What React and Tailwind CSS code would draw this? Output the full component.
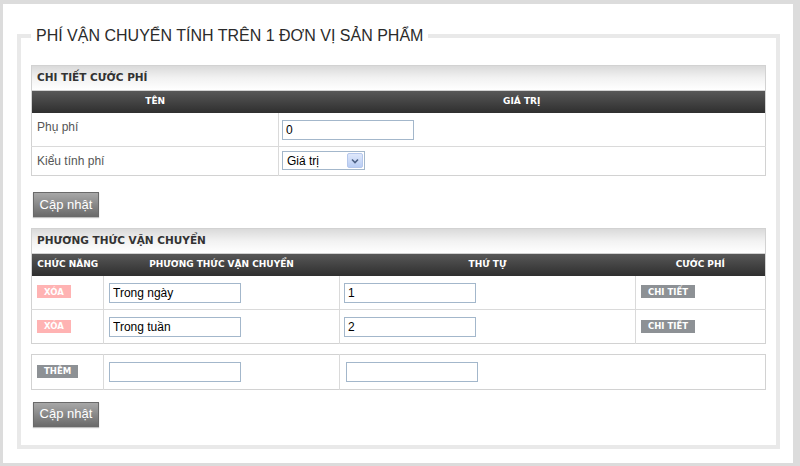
import React from "react";

const head = { fontFamily: '"DejaVu Sans", Tahoma, sans-serif' };

function SectionTitle({ children }) {
  return (
    <div
      style={head}
      className="h-[26px] flex items-center pl-[5px] text-[10.5px] font-bold text-[#333] border border-[#d2d2d2] bg-gradient-to-b from-[#dadada] via-[#f2f2f2] to-white"
    >
      {children}
    </div>
  );
}

function Th({ children, className = "" }) {
  return (
    <th
      style={head}
      className={`h-[22px] p-0 text-[9px] font-bold text-white text-center ${className}`}
    >
      {children}
    </th>
  );
}

function TextBox({ value, w = "w-[132px]", h = "h-[20px]" }) {
  return (
    <input
      readOnly
      defaultValue={value}
      className={`${w} ${h} border border-[#a3b7cb] px-[3px] text-[12px] text-black bg-white outline-none`}
    />
  );
}

function Badge({ children, tone }) {
  return (
    <span
      style={head}
      className={`inline-flex items-center justify-center h-[13px] px-[7px] text-[8.5px] font-bold text-white ${
        tone === "pink" ? "bg-[#ffb3b3]" : "bg-[#8d9195]"
      }`}
    >
      {children}
    </span>
  );
}

function UpdateButton() {
  return (
    <button className="w-[66px] h-[25px] border border-[#6a6a6a] bg-gradient-to-b from-[#a8a8a8] to-[#6b6b6b] text-white text-[13px] shadow-[0_1px_1px_rgba(0,0,0,0.25)]">
      Cập nhật
    </button>
  );
}

export default function App() {
  const methods = [
    { name: "Trong ngày", order: "1" },
    { name: "Trong tuần", order: "2" },
  ];

  return (
    <div
      style={{ fontFamily: '"Liberation Sans", Arial, sans-serif' }}
      className="w-[800px] h-[466px] bg-white border-l-[3px] border-t-[4px] border-r-[7px] border-b-[3px] border-[#dcdcdc] pl-[14px] pr-[13px] pt-[22px] overflow-hidden"
    >
      <fieldset className="border-[4px] border-[#e9e9e9] px-[10px] pt-[19px] h-[423px]">
        <legend className="px-[5px] text-[16px] leading-[20px] text-[#2b2b2b]">
          PHÍ VẬN CHUYỂN TÍNH TRÊN 1 ĐƠN VỊ SẢN PHẨM
        </legend>

        {/* chi tiết cước phí */}
        <SectionTitle>CHI TIẾT CƯỚC PHÍ</SectionTitle>
        <table className="w-full border-collapse border border-[#d2d2d2] border-t-0 text-[12px]">
          <thead>
            <tr className="bg-gradient-to-b from-[#585858] to-[#2f2f2f]">
              <Th className="w-[247px]">TÊN</Th>
              <Th>GIÁ TRỊ</Th>
            </tr>
          </thead>
          <tbody>
            <tr className="h-[33px] border-b border-[#dadada]">
              <td className="pl-[5px] text-[#555] align-middle pb-[5px]">Phụ phí</td>
              <td className="border-l border-[#dadada] pl-[3px] pt-[2px]">
                <TextBox value="0" />
              </td>
            </tr>
            <tr className="h-[29px]">
              <td className="pl-[5px] text-[#555]">Kiểu tính phí</td>
              <td className="border-l border-[#dadada] pl-[3px]">
                <div className="w-[83px] h-[19px] border border-[#a3b7cb] flex items-center justify-between pl-[4px] pr-[1px] bg-white">
                  <span className="text-[12px] text-black">Giá trị</span>
                  <span className="w-[16px] h-[15px] rounded-[2px] bg-gradient-to-b from-[#dfe8fb] to-[#b9cdf4] border border-[#b6c8ec] flex items-center justify-center">
                    <svg width="8" height="6" viewBox="0 0 8 6">
                      <path d="M1 1.5 L4 4.5 L7 1.5" stroke="#4d6185" strokeWidth="1.6" fill="none" />
                    </svg>
                  </span>
                </div>
              </td>
            </tr>
          </tbody>
        </table>

        <div className="mt-[16px] ml-[2px]">
          <UpdateButton />
        </div>

        {/* phương thức vận chuyển */}
        <div className="mt-[11px]">
          <SectionTitle>PHƯƠNG THỨC VẬN CHUYỂN</SectionTitle>
          <table className="w-full border-collapse border border-[#d2d2d2] border-t-0 text-[12px]">
            <thead>
              <tr className="bg-gradient-to-b from-[#585858] to-[#2f2f2f]">
                <Th className="w-[72px]">CHỨC NĂNG</Th>
                <Th className="w-[236px]">PHƯƠNG THỨC VẬN CHUYỂN</Th>
                <Th className="w-[296px]">THỨ TỰ</Th>
                <Th>CƯỚC PHÍ</Th>
              </tr>
            </thead>
            <tbody>
              {methods.map((m, i) => (
                <tr key={i} className="h-[34px] border-t border-[#dadada] first:border-t-0">
                  <td className="pl-[5px] align-middle pb-[4px]">
                    <Badge tone="pink">XÓA</Badge>
                  </td>
                  <td className="border-l border-[#dadada] pl-[5px]">
                    <TextBox value={m.name} />
                  </td>
                  <td className="border-l border-[#dadada] pl-[4px]">
                    <TextBox value={m.order} />
                  </td>
                  <td className="border-l border-[#dadada] pl-[5px] pb-[4px]">
                    <Badge>CHI TIẾT</Badge>
                  </td>
                </tr>
              ))}
            </tbody>
          </table>
        </div>

        <table className="mt-[10px] w-full border-collapse border border-[#d2d2d2] text-[12px]">
          <tbody>
            <tr className="h-[35px]">
              <td className="w-[72px] pl-[5px] pb-[4px]">
                <Badge>THÊM</Badge>
              </td>
              <td className="w-[236px] border-l border-[#dadada] pl-[5px]">
                <TextBox value="" />
              </td>
              <td className="border-l border-[#dadada] pl-[6px]">
                <TextBox value="" />
              </td>
            </tr>
          </tbody>
        </table>

        <div className="mt-[11px] ml-[2px]">
          <UpdateButton />
        </div>
      </fieldset>
    </div>
  );
}
